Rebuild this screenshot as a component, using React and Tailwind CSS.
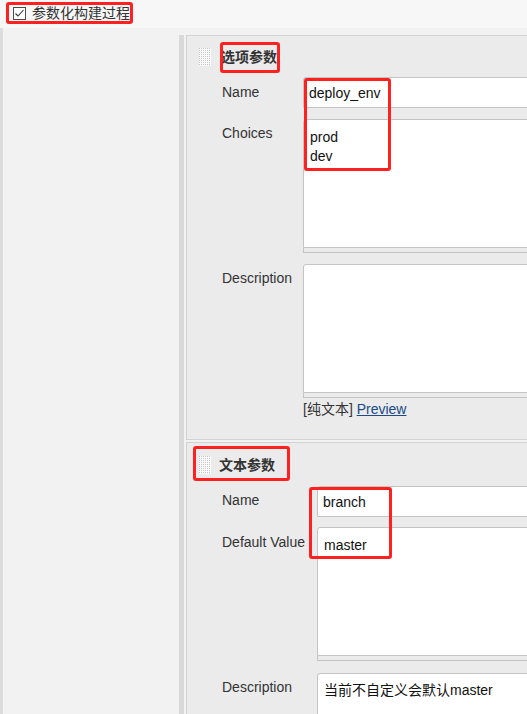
import React from "react";

const FONT = "font-['Liberation_Sans','Noto_Sans_CJK_SC',sans-serif]";
const RED = "absolute border-[3px] border-[#ff2020] rounded-[3px] pointer-events-none";

function Handle() {
  const dots = [];
  for (let y = 0; y < 9; y++)
    for (let x = 0; x < 6; x++)
      dots.push(<rect key={`${x}-${y}`} x={x * 2} y={y * 2} width="1" height="1" fill="#c4c4c4" />);
  return (
    <svg width="12" height="18" viewBox="0 0 12 18" className="shrink-0 block">
      <rect width="12" height="18" fill="#fbfbfb" />
      {dots}
    </svg>
  );
}

function Checkbox() {
  return (
    <svg width="13" height="13" viewBox="0 0 13 13" className="block shrink-0">
      <rect x="0.5" y="0.5" width="12" height="12" fill="#fff" stroke="#4a4a4a" />
      <path d="M2.5 6.5 L5 9 L10.5 3" fill="none" stroke="#333" strokeWidth="1.1" />
    </svg>
  );
}

function TextArea({ lines = [], h = "h-[129px]", pt = "pt-[8px]" }) {
  return (
    <div className="flex-1 flex flex-col">
      <div className={`${h} bg-white border border-[#c4c4c4] rounded-tl-[3px] px-[6px] ${pt} text-[14px] leading-[19px] text-[#111]`}>
        {lines.map((l, i) => (
          <div key={i}>{l}</div>
        ))}
      </div>
      <div className="h-[5px] border-l border-r border-b border-[#c4c4c4] bg-[#ebebeb]" />
    </div>
  );
}

function Input({ value }) {
  return (
    <div className="flex-1 h-[31px] bg-white border border-[#c4c4c4] rounded-tl-[3px] px-[5px] pt-[1px] flex items-center text-[14px] text-[#111]">
      {value}
    </div>
  );
}

export default function App() {
  return (
    <div className={`w-[527px] h-[714px] overflow-hidden bg-[#f2f2f2] ${FONT}`}>
      {/* top bar */}
      <div className="h-[28px] bg-[#f7f7f7] pl-[6px] pt-[2px]">
        <div className="w-[127px] h-[22px] border-[3px] border-[#ff2020] rounded-[3px] flex items-center pl-[4px] gap-[6px]">
          <Checkbox />
          <span className="text-[14px] leading-[16px] text-[#333]">参数化构建过程</span>
        </div>
      </div>

      {/* body */}
      <div className="flex w-[1000px] h-[686px]">
        <div className="w-[3px] bg-[#dcdcdc]" />
        <div className="w-[176px]" />
        <div className="w-[5px] mt-[7px] bg-[#d9d9d9]" />
        <div className="w-[2px]" />
        <div className="w-[700px] mt-[7px] flex flex-col gap-[2px]">
          {/* panel 1 */}
          <div className="relative bg-[#ebebeb] border-t border-l border-b border-[#d2d2d2]">
            <div className="pl-[12px] pt-[12px] flex items-center gap-[10px] h-[30px]">
              <Handle />
              <span className="text-[14px] font-bold leading-[18px] text-[#333]">选项参数</span>
            </div>
            <div className="pl-[35px] mt-[11px] w-[500px] flex flex-col text-[14px] text-[#333]">
              <div className="flex">
                <div className="w-[81px] pt-[5px] leading-[20px]">Name</div>
                <Input value="deploy_env" />
              </div>
              <div className="flex mt-[11px]">
                <div className="w-[81px] pt-[4px] leading-[20px]">Choices</div>
                <TextArea lines={["prod", "dev"]} />
              </div>
              <div className="flex mt-[11px]">
                <div className="w-[81px] pt-[4px] leading-[20px]">Description</div>
                <TextArea />
              </div>
              <div className="flex">
                <div className="w-[81px]" />
                <div className="leading-[20px] pt-[1px]">
                  [纯文本] <span className="text-[#204a87] underline">Preview</span>
                </div>
              </div>
              <div className="h-[20px]" />
            </div>
            <div className={`${RED} left-[33px] top-[6px] w-[60px] h-[31px]`} />
            <div className={`${RED} left-[117px] top-[42px] w-[87px] h-[93px]`} />
          </div>

          {/* panel 2 */}
          <div className="relative flex-1 bg-[#ebebeb] border-t border-l border-[#d2d2d2]">
            <div className="pl-[12px] pt-[13px] flex items-center gap-[8px] h-[31px]">
              <Handle />
              <span className="text-[14px] font-bold leading-[18px] text-[#333]">文本参数</span>
            </div>
            <div className="pl-[35px] mt-[12px] w-[500px] flex flex-col text-[14px] text-[#333]">
              <div className="flex">
                <div className="w-[95px] pt-[4px] leading-[20px]">Name</div>
                <Input value="branch" />
              </div>
              <div className="flex mt-[10px]">
                <div className="w-[95px] pt-[5px] leading-[20px] whitespace-nowrap">Default Value</div>
                <TextArea lines={["master"]} pt="pt-[8px]" />
              </div>
              <div className="flex mt-[12px]">
                <div className="w-[95px] pt-[4px] leading-[20px]">Description</div>
                <TextArea lines={["当前不自定义会默认master"]} pt="pt-[7px]" />
              </div>
            </div>
            <div className={`${RED} left-[6px] top-[3px] w-[97px] h-[35px]`} />
            <div className={`${RED} left-[122px] top-[44px] w-[83px] h-[72px]`} />
          </div>
        </div>
      </div>
    </div>
  );
}
